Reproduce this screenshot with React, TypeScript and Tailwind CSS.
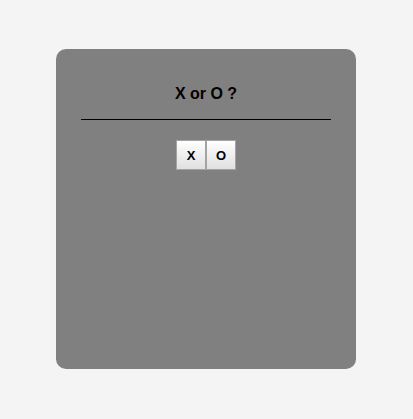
export default function App() {
  return (
    <div className="h-[419px] w-[413px] bg-[#f4f4f4] pl-[56px] pt-[49px] font-['Liberation_Sans',Arial,sans-serif]">
      <div className="flex h-[320px] w-[300px] flex-col items-center rounded-[10px] bg-[#808080] pt-[36px]">
        <h3 className="text-[16px] font-bold leading-[18px] text-black">X or O ?</h3>
        <div className="mt-[16px] h-px w-[250px] bg-black" />
        <div className="mt-[20px] flex">
          <button className="flex h-[30px] w-[30px] items-center justify-center border border-[#a4a4a4] bg-gradient-to-b from-white to-[#e0e0e0] pt-px text-[13px] font-bold text-black">
            X
          </button>
          <button className="flex h-[30px] w-[30px] items-center justify-center border border-[#a4a4a4] bg-gradient-to-b from-white to-[#e0e0e0] pt-px text-[13px] font-bold text-black">
            O
          </button>
        </div>
      </div>
    </div>
  );
}
